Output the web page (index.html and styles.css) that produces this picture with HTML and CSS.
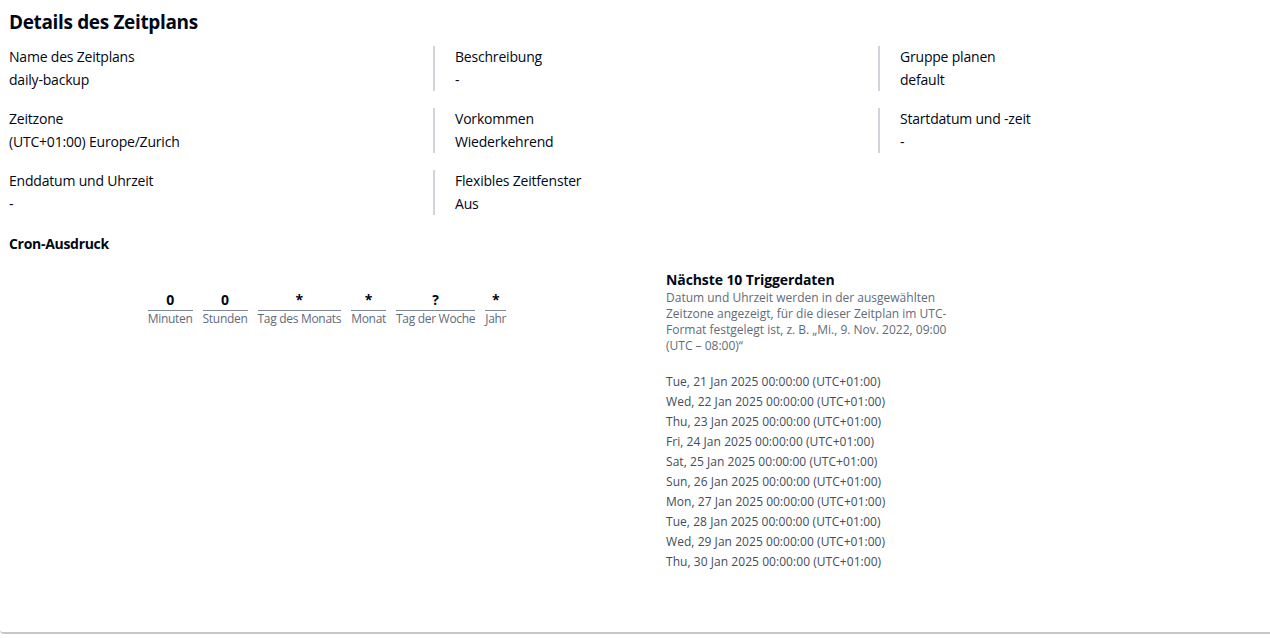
FILE: index.html
```html
<!DOCTYPE html>
<html lang="de">
<head>
<meta charset="utf-8">
<title>Details des Zeitplans</title>
<link rel="stylesheet" href="styles.css">
</head>
<body>
<div class="panel">
  <h2 class="title">Details des Zeitplans</h2>
  <div class="kv-grid">
    <div class="kv"><div class="kv-label">Name des Zeitplans</div><div class="kv-value">daily-backup</div></div>
    <div class="kv"><div class="kv-label">Beschreibung</div><div class="kv-value">-</div></div>
    <div class="kv"><div class="kv-label">Gruppe planen</div><div class="kv-value">default</div></div>
    <div class="kv"><div class="kv-label">Zeitzone</div><div class="kv-value">(UTC+01:00) Europe/Zurich</div></div>
    <div class="kv"><div class="kv-label">Vorkommen</div><div class="kv-value">Wiederkehrend</div></div>
    <div class="kv"><div class="kv-label">Startdatum und -zeit</div><div class="kv-value">-</div></div>
    <div class="kv"><div class="kv-label">Enddatum und Uhrzeit</div><div class="kv-value">-</div></div>
    <div class="kv"><div class="kv-label">Flexibles Zeitfenster</div><div class="kv-value">Aus</div></div>
  </div>
  <h3 class="cron-title">Cron-Ausdruck</h3>
  <div class="cron-row">
    <div class="cron-left">
      <div class="cron-fields">
        <div class="cf"><div class="cf-val">0</div><div class="cf-lab">Minuten</div></div>
        <div class="cf"><div class="cf-val">0</div><div class="cf-lab">Stunden</div></div>
        <div class="cf"><div class="cf-val">*</div><div class="cf-lab">Tag des Monats</div></div>
        <div class="cf"><div class="cf-val">*</div><div class="cf-lab">Monat</div></div>
        <div class="cf"><div class="cf-val">?</div><div class="cf-lab">Tag der Woche</div></div>
        <div class="cf"><div class="cf-val">*</div><div class="cf-lab">Jahr</div></div>
      </div>
    </div>
    <div class="cron-right">
      <div class="next-title">Nächste 10 Triggerdaten</div>
      <div class="next-desc">Datum und Uhrzeit werden in der ausgewählten Zeitzone angezeigt, für die dieser Zeitplan im UTC-Format festgelegt ist, z. B. „Mi., 9. Nov. 2022, 09:00 (UTC – 08:00)“</div>
      <ul class="dates">
        <li>Tue, 21 Jan 2025 00:00:00 (UTC+01:00)</li>
        <li>Wed, 22 Jan 2025 00:00:00 (UTC+01:00)</li>
        <li>Thu, 23 Jan 2025 00:00:00 (UTC+01:00)</li>
        <li>Fri, 24 Jan 2025 00:00:00 (UTC+01:00)</li>
        <li>Sat, 25 Jan 2025 00:00:00 (UTC+01:00)</li>
        <li>Sun, 26 Jan 2025 00:00:00 (UTC+01:00)</li>
        <li>Mon, 27 Jan 2025 00:00:00 (UTC+01:00)</li>
        <li>Tue, 28 Jan 2025 00:00:00 (UTC+01:00)</li>
        <li>Wed, 29 Jan 2025 00:00:00 (UTC+01:00)</li>
        <li>Thu, 30 Jan 2025 00:00:00 (UTC+01:00)</li>
      </ul>
    </div>
  </div>
</div>
</body>
</html>
```
FILE: styles.css
```css
* { box-sizing: border-box; }
html, body { margin: 0; padding: 0; background: #ffffff; }
body {
  font-family: "Open Sans", "Noto Sans", Arial, sans-serif;
  color: #000716;
  font-size: 14px;
  line-height: 22px;
}
.panel {
  height: 634px;
  border-bottom: 2px solid #c6c6cd;
  border-bottom-left-radius: 4px;
  padding: 8px 9px 0 9px;
}
.title {
  margin: 0;
  font-size: 19px;
  line-height: 28px;
  font-weight: 700;
  letter-spacing: -0.35px;
}
.kv-grid {
  margin-top: 10px;
  display: grid;
  grid-template-columns: 424px 445px 1fr;
  row-gap: 17px;
  letter-spacing: -0.2px;
}
.kv { padding-right: 20px; }
.kv:nth-child(3n+2), .kv:nth-child(3n) {
  border-left: 2px solid #d1d5db;
  padding-left: 20px;
}
.kv-label { color: #000716; line-height: 22px; }
.kv-value { color: #000716; line-height: 22px; padding-top: 1px; }
.cron-title {
  margin: 18px 0 0 0;
  font-size: 14px;
  line-height: 22px;
  font-weight: 700;
  letter-spacing: -0.3px;
}
.cron-row {
  display: flex;
  margin-top: 15px;
}
.cron-left {
  width: 636px;
  display: flex;
  justify-content: center;
  padding-top: 20px;
}
.cron-fields {
  display: flex;
  gap: 10px;
  align-items: flex-start;
}
.cf { display: flex; flex-direction: column; align-items: stretch; }
.cf-val {
  text-align: center;
  font-weight: 700;
  font-size: 14px;
  line-height: 20px;
  border-bottom: 1px solid #7d8998;
}
.cf-lab {
  color: #5f6b7a;
  font-size: 12px;
  line-height: 16px;
  text-align: center;
  letter-spacing: -0.3px;
}
.cron-right { width: 290px; margin-left: 21px; }
.next-title {
  font-weight: 700;
  font-size: 14px;
  line-height: 20px;
  letter-spacing: -0.1px;
}
.next-desc {
  color: #5f6b7a;
  font-size: 12px;
  line-height: 16px;
}
.dates {
  list-style: none;
  margin: 18px 0 0 0;
  padding: 0;
  font-size: 12px;
  line-height: 20px;
  color: #414d5c;
  letter-spacing: 0.05px;
}
```
